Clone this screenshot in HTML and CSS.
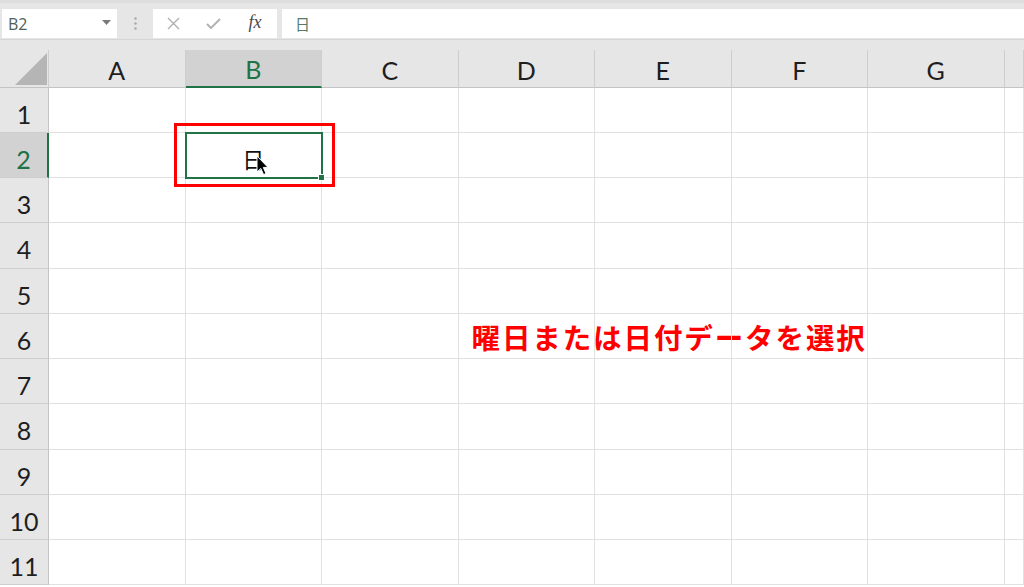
FILE: index.html
```html
<!DOCTYPE html>
<html lang="ja">
<head>
    <meta charset="UTF-8">
    <meta name="viewport" content="width=device-width, initial-scale=1.0">
    <title>Excel - 曜日</title>
    <link rel="stylesheet" href="styles.css">
</head>
<body>
    <div class="toolbar">
        <div class="name-box">
            <span>B2</span>
            <svg class="drop" width="9" height="5" viewBox="0 0 9 5"><polygon points="0,0 9,0 4.5,5" fill="#7a7a7a"/></svg>
        </div>
        <div class="grip">
            <svg width="3" height="13" viewBox="0 0 3 13"><circle cx="1.5" cy="1.5" r="1.2" fill="#a8a8a8"/><circle cx="1.5" cy="6.5" r="1.2" fill="#a8a8a8"/><circle cx="1.5" cy="11.5" r="1.2" fill="#a8a8a8"/></svg>
        </div>
        <div class="fx-buttons">
            <span class="btn"><svg width="13" height="13" viewBox="0 0 13 13"><path d="M1 1 L12 12 M12 1 L1 12" stroke="#b0b0b0" stroke-width="1.4" fill="none"/></svg></span>
            <span class="btn"><svg width="15" height="11" viewBox="0 0 15 11"><path d="M1 6 L5 10 L14 1" stroke="#b3b3b3" stroke-width="2" fill="none"/></svg></span>
            <span class="btn fx">fx</span>
        </div>
        <div class="formula">日</div>
    </div>

    <div class="sheet">
        <div class="row head">
            <div class="corner"><svg width="49" height="37" viewBox="0 0 49 37"><polygon points="47,3 47,35 15,35" fill="#b5b5b5"/></svg></div>
            <div class="ch">A</div>
            <div class="ch sel">B</div>
            <div class="ch">C</div>
            <div class="ch">D</div>
            <div class="ch">E</div>
            <div class="ch">F</div>
            <div class="ch">G</div>
            <div class="ch"></div>
        </div>
        <div class="row">
            <div class="rh">1</div>
            <div class="c"></div><div class="c"></div><div class="c"></div><div class="c"></div><div class="c"></div><div class="c"></div><div class="c"></div><div class="c"></div>
        </div>
        <div class="row">
            <div class="rh sel">2</div>
            <div class="c"></div>
            <div class="c active">
                <span class="value">日</span>
                <div class="sel-box"><div class="handle"></div></div>
                <div class="mark-box"></div>
                <svg class="pointer" width="13" height="21" viewBox="0 0 13 21"><path d="M1 1 L1 17 L4.8 13.4 L7.6 19.6 L10 18.5 L7.3 12.4 L12 12.4 Z" fill="#000" stroke="#fff" stroke-width="1"/></svg>
            </div>
            <div class="c"></div><div class="c"></div><div class="c"></div><div class="c"></div><div class="c"></div><div class="c"></div>
        </div>
        <div class="row">
            <div class="rh">3</div>
            <div class="c"></div><div class="c"></div><div class="c"></div><div class="c"></div><div class="c"></div><div class="c"></div><div class="c"></div><div class="c"></div>
        </div>
        <div class="row">
            <div class="rh">4</div>
            <div class="c"></div><div class="c"></div><div class="c"></div><div class="c"></div><div class="c"></div><div class="c"></div><div class="c"></div><div class="c"></div>
        </div>
        <div class="row">
            <div class="rh">5</div>
            <div class="c"></div><div class="c"></div><div class="c"></div><div class="c"></div><div class="c"></div><div class="c"></div><div class="c"></div><div class="c"></div>
        </div>
        <div class="row">
            <div class="rh">6</div>
            <div class="c"></div><div class="c"></div><div class="c"></div>
            <div class="c"><span class="note">曜日または日付データを選択</span></div>
            <div class="c"></div><div class="c"></div><div class="c"></div><div class="c"></div>
        </div>
        <div class="row">
            <div class="rh">7</div>
            <div class="c"></div><div class="c"></div><div class="c"></div><div class="c"></div><div class="c"></div><div class="c"></div><div class="c"></div><div class="c"></div>
        </div>
        <div class="row">
            <div class="rh">8</div>
            <div class="c"></div><div class="c"></div><div class="c"></div><div class="c"></div><div class="c"></div><div class="c"></div><div class="c"></div><div class="c"></div>
        </div>
        <div class="row">
            <div class="rh">9</div>
            <div class="c"></div><div class="c"></div><div class="c"></div><div class="c"></div><div class="c"></div><div class="c"></div><div class="c"></div><div class="c"></div>
        </div>
        <div class="row">
            <div class="rh">10</div>
            <div class="c"></div><div class="c"></div><div class="c"></div><div class="c"></div><div class="c"></div><div class="c"></div><div class="c"></div><div class="c"></div>
        </div>
        <div class="row">
            <div class="rh">11</div>
            <div class="c"></div><div class="c"></div><div class="c"></div><div class="c"></div><div class="c"></div><div class="c"></div><div class="c"></div><div class="c"></div>
        </div>
    </div>
</body>
</html>
```

FILE: styles.css
```css
:root {
    --excel-green: #217346;
    --header-bg: #e6e6e6;
    --header-sel: #d2d2d2;
    --header-line: #cecece;
    --grid-line: #e1e1e1;
    --mark-red: #ff0000;
    --cols: 49px repeat(7, 136.5px) 1fr;
}

* {
    box-sizing: border-box;
    margin: 0;
    padding: 0;
}

body {
    width: 1024px;
    height: 587px;
    overflow: hidden;
    background-color: var(--header-bg);
    font-family: Lato, "Noto Sans CJK JP", sans-serif;
    color: #1e1e1e;
}

/* formula bar */
.toolbar {
    height: 40px;
    padding-top: 6px;
    display: flex;
    align-items: flex-start;
    border-top: 3px solid #dedede;
    border-bottom: 1px solid #d6d6d6;
}

.name-box {
    width: 115px;
    height: 29px;
    margin-left: 2px;
    background-color: white;
    display: flex;
    align-items: center;
    justify-content: space-between;
    padding: 0 6px 0 6px;
    font-family: "Open Sans", sans-serif;
    font-size: 16px;
    color: #506058;
}

.name-box .drop {
    margin-bottom: 3px;
}

.grip {
    width: 36px;
    height: 29px;
    display: flex;
    align-items: center;
    justify-content: center;
}

.fx-buttons {
    width: 124px;
    height: 29px;
    background-color: white;
    display: flex;
    align-items: center;
}

.btn {
    width: 40px;
    height: 29px;
    display: flex;
    align-items: center;
    justify-content: center;
}

.btn.fx {
    width: 44px;
    font-family: "Liberation Serif", serif;
    font-style: italic;
    font-size: 18px;
    color: #4a4a4a;
    padding-bottom: 2px;
}

.formula {
    flex: 1;
    height: 29px;
    margin-left: 5px;
    background-color: white;
    padding-left: 13px;
    display: flex;
    align-items: center;
    font-family: "Noto Sans CJK JP", sans-serif;
    font-size: 15px;
    color: #587a68;
}

/* sheet grid */
.sheet {
    margin-top: 10px;
    height: 537px;
    overflow: hidden;
    background-color: white;
}

.row {
    display: grid;
    grid-template-columns: var(--cols);
    height: 45.25px;
}

.row.head {
    height: 37.5px;
    background-color: var(--header-bg);
}

.corner {
    border-right: 1px solid var(--header-line);
    border-bottom: 1px solid #c4c4c4;
}

.corner svg {
    display: block;
}

.ch {
    display: flex;
    align-items: center;
    justify-content: center;
    font-size: 25px;
    border-right: 1px solid var(--header-line);
    border-bottom: 1px solid #c4c4c4;
    padding-top: 2px;
}

.ch.sel {
    background-color: var(--header-sel);
    color: var(--excel-green);
    border-bottom: 2px solid var(--excel-green);
}

.rh {
    background-color: var(--header-bg);
    display: flex;
    justify-content: center;
    align-items: center;
    padding-top: 8px;
    font-size: 25px;
    border-right: 1px solid #c4c4c4;
    border-bottom: 1px solid var(--header-line);
}

.rh.sel {
    background-color: var(--header-sel);
    color: var(--excel-green);
    border-right: 2px solid var(--excel-green);
}

.c {
    border-right: 1px solid var(--grid-line);
    border-bottom: 1px solid var(--grid-line);
    position: relative;
}

.c.active {
    z-index: 2;
    display: flex;
    justify-content: center;
    align-items: center;
    padding-top: 6px;
}

.value {
    font-family: "Noto Sans CJK JP", sans-serif;
    font-size: 22px;
    color: #111;
}

.sel-box {
    position: absolute;
    left: -1px;
    top: -1px;
    right: -2px;
    bottom: -2px;
    border: 2px solid var(--excel-green);
}

.handle {
    position: absolute;
    right: -4px;
    bottom: -4px;
    width: 7px;
    height: 7px;
    background-color: var(--excel-green);
    border: 1px solid white;
}

.mark-box {
    position: absolute;
    left: -11.5px;
    top: -9.75px;
    width: 161px;
    height: 64px;
    border: 3px solid var(--mark-red);
}

.pointer {
    position: absolute;
    left: 70px;
    top: 22px;
}

.note {
    position: absolute;
    left: 13px;
    top: 7px;
    white-space: nowrap;
    font-family: "Noto Sans CJK JP", sans-serif;
    font-weight: bold;
    font-size: 28.5px;
    letter-spacing: 1.9px;
    color: var(--mark-red);
    line-height: 1.1;
}
```
